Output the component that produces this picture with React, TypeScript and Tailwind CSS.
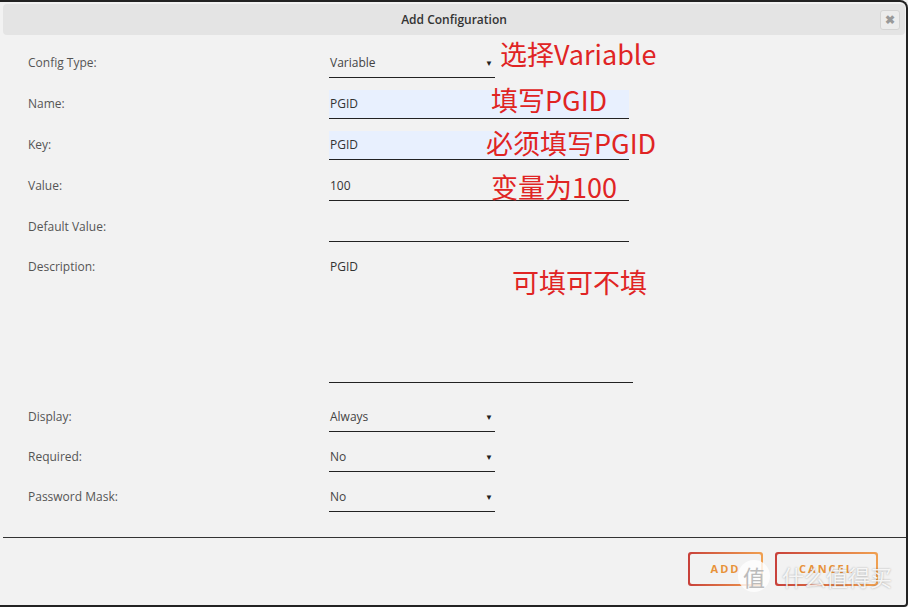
import React from "react";

const font = { fontFamily: '"Open Sans", "Noto Sans", sans-serif' };
const cjk = { fontFamily: '"Noto Sans CJK SC", "Noto Sans", sans-serif' };

function Label({ text }: { text: string }) {
  return (
    <div className="w-[329px] pl-[28px] h-[28px] flex items-center text-[12px] text-[#555]">{text}</div>
  );
}

function Select({ value }: { value: string }) {
  return (
    <div className="w-[166px] h-[29px] border-b border-[#222] flex items-center justify-between pl-[1px] pr-[2px] text-[12px] text-[#444]">
      <span>{value}</span>
      <span className="text-[8px] text-[#222]">▼</span>
    </div>
  );
}

function Input({ value, blue }: { value: string; blue?: boolean }) {
  return (
    <div
      className={`w-[300px] h-[29px] border-b border-[#222] flex items-center pl-[1px] text-[12px] text-[#333] ${
        blue ? "bg-[#e8f0fe]" : ""
      }`}
    >
      {value}
    </div>
  );
}

export default function App() {
  return (
    <div style={font} className="relative w-[908px] h-[607px] bg-[#f2f2f2] overflow-hidden">
      <div className="absolute inset-0 border-t-2 border-r-2 border-b-2 border-[#222] rounded-tr-[8px] rounded-br-[4px] pointer-events-none" />
      {/* title */}
      <div className="mx-[3px] mt-[4px] h-[31px] bg-[#e4e4e4] rounded-[4px] flex items-center justify-center relative">
        <span className="text-[12px] font-semibold text-[#333]">Add Configuration</span>
        <div className="absolute right-[5px] top-[6px] w-[20px] h-[20px] rounded-[3px] bg-[#ececec] border border-[#d4d4d4] flex items-center justify-center text-[12px] font-bold text-[#999]">
          ✖
        </div>
      </div>

      {/* form */}
      <div className="flex flex-col pt-[14px] gap-[12px]">
        <div className="flex">
          <Label text="Config Type:" />
          <Select value="Variable" />
        </div>
        <div className="flex">
          <Label text="Name:" />
          <Input value="PGID" blue />
        </div>
        <div className="flex">
          <Label text="Key:" />
          <Input value="PGID" blue />
        </div>
        <div className="flex">
          <Label text="Value:" />
          <Input value="100" />
        </div>
        <div className="flex">
          <Label text="Default Value:" />
          <Input value="" />
        </div>
        <div className="flex">
          <div className="w-[329px] pl-[28px] pt-[5px] text-[12px] leading-[16px] text-[#555]">Description:</div>
          <div className="w-[304px] h-[129px] border-b border-[#222] pt-[5px] pl-[1px] text-[12px] leading-[16px] text-[#333]">
            PGID
          </div>
        </div>
      </div>
      <div className="flex flex-col pt-[20px] gap-[11px]">
        <div className="flex">
          <Label text="Display:" />
          <Select value="Always" />
        </div>
        <div className="flex">
          <Label text="Required:" />
          <Select value="No" />
        </div>
        <div className="flex">
          <Label text="Password Mask:" />
          <Select value="No" />
        </div>
      </div>

      <div className="ml-[3px] mt-[25px] border-t border-[#333]" />

      <div className="flex justify-end gap-[12px] pr-[30px] pt-[14px]">
        <div className="w-[75px] h-[34px] rounded-[3px] p-[2px] bg-gradient-to-r from-[#c8403a] to-[#f0a050]">
          <div className="w-full h-full rounded-[2px] bg-[#f2f2f2] flex items-center justify-center text-[11px] font-bold tracking-[2px] text-[#e8923a]">
            ADD
          </div>
        </div>
        <div className="w-[103px] h-[34px] rounded-[3px] p-[2px] bg-gradient-to-r from-[#c8403a] to-[#f0a050]">
          <div className="w-full h-full rounded-[2px] bg-[#f2f2f2] flex items-center justify-center text-[11px] font-bold tracking-[2px] text-[#e8923a]">
            CANCEL
          </div>
        </div>
      </div>

      {/* annotations */}
      <div style={cjk} className="absolute left-[500px] top-[37px] text-[27px] leading-[34px] text-[#e02424]">选择Variable</div>
      <div style={cjk} className="absolute left-[491px] top-[83px] text-[27px] leading-[34px] text-[#e02424]">填写PGID</div>
      <div style={cjk} className="absolute left-[486px] top-[126px] text-[27px] leading-[34px] text-[#e02424]">必须填写PGID</div>
      <div style={cjk} className="absolute left-[491px] top-[170px] text-[27px] leading-[34px] text-[#e02424]">变量为100</div>
      <div style={cjk} className="absolute left-[512px] top-[265px] text-[27px] leading-[34px] text-[#e02424]">可填可不填</div>

      {/* watermark */}
      <div className="absolute left-[738px] top-[560px] flex items-center gap-[12px] pointer-events-none">
        <div style={cjk} className="w-[32px] h-[32px] rounded-full bg-white/80 flex items-center justify-center text-[22px] text-[#bbb]">
          值
        </div>
        <div style={{ ...cjk, textShadow: "0 0 2px rgba(0,0,0,0.35)" }} className="text-[22px] leading-[30px] text-white/85">
          什么值得买
        </div>
      </div>
    </div>
  );
}
